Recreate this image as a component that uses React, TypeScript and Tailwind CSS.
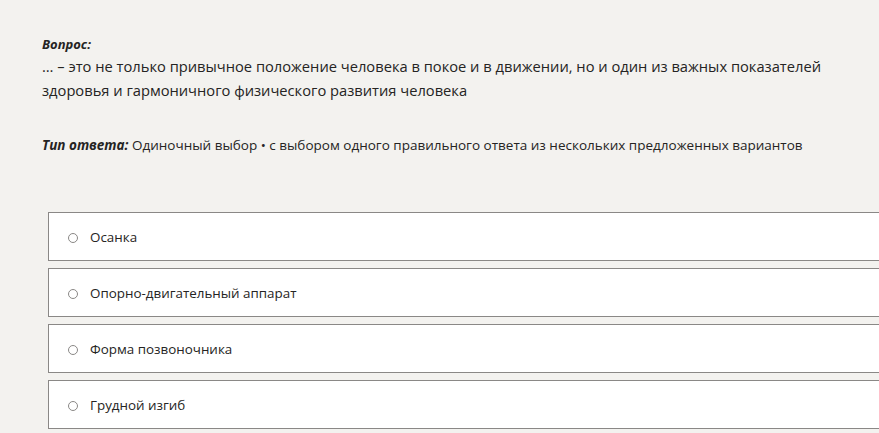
const OPTIONS = ["Осанка", "Опорно-двигательный аппарат", "Форма позвоночника", "Грудной изгиб"];

function Option({ label }: { label: string }) {
  return (
    <label className="flex h-[49px] w-[860px] shrink-0 items-center border border-[#8a8886] bg-white pl-[19px] pt-[2px]">
      <span className="h-[10px] w-[10px] rounded-full border border-[#8a8886] bg-white" />
      <span className="ml-[12px] text-[13.4px] text-[#252423]">{label}</span>
    </label>
  );
}

export default function App() {
  return (
    <div
      className="h-[433px] w-[879px] overflow-hidden bg-[#f3f2ef] text-[#252423]"
      style={{ fontFamily: '"Open Sans", "Noto Sans", sans-serif' }}
    >
      <div className="pl-[42px] pt-[34px]">
        <div className="text-[13px] font-bold italic leading-[20px]">Вопрос:</div>
        <p className="w-[800px] text-[14.7px] leading-[24px]">
          … – это не только привычное положение человека в покое и в движении, но и один из важных показателей
          здоровья и гармоничного физического развития человека
        </p>
        <p className="mt-[33px] text-[13.5px] leading-[20px]">
          <span className="font-bold italic">Тип ответа:</span> Одиночный выбор • с выбором одного правильного ответа из нескольких предложенных вариантов
        </p>
      </div>
      <div className="mt-[57px] flex flex-col gap-[7px] pl-[48px]">
        {OPTIONS.map((o) => (
          <Option key={o} label={o} />
        ))}
      </div>
    </div>
  );
}
